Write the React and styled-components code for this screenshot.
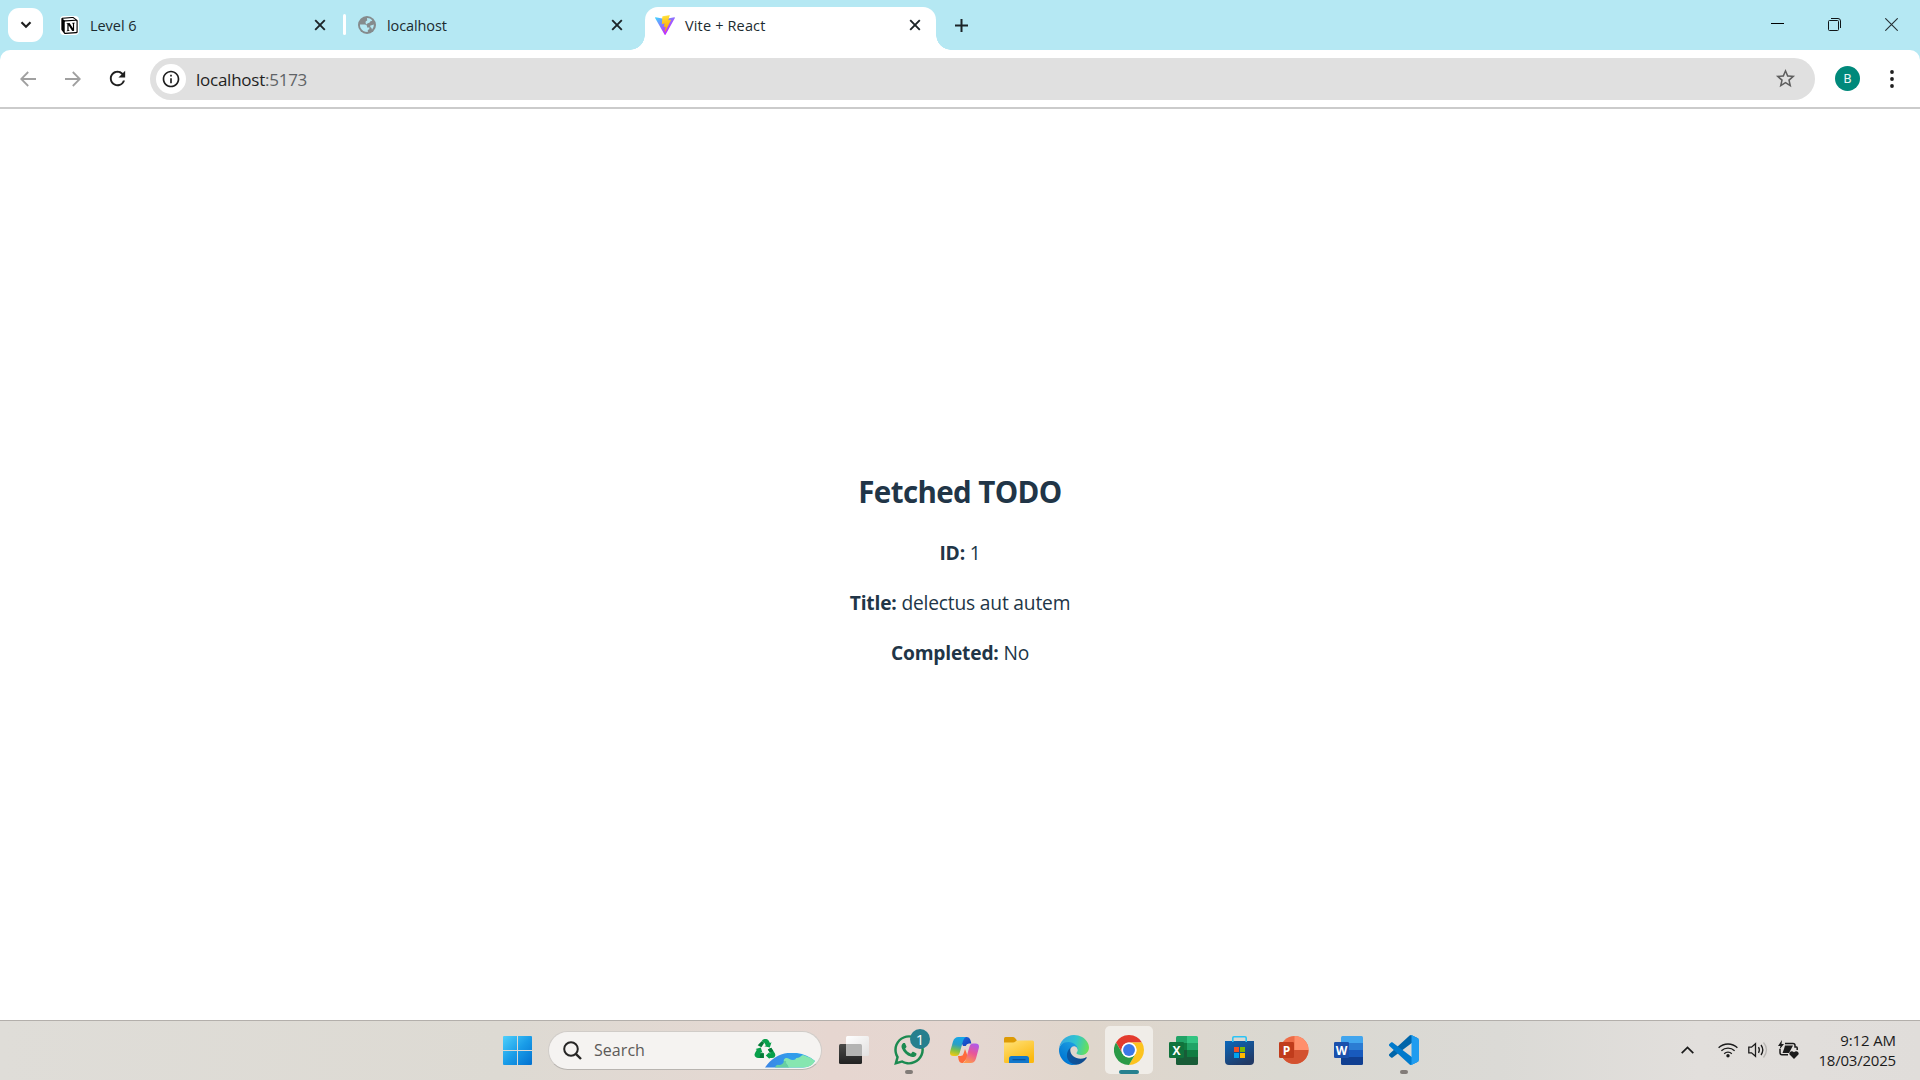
import React from "react";
import styled, { createGlobalStyle } from "styled-components";
import { FaWhatsapp } from "react-icons/fa";
import { SiNotion } from "react-icons/si";
import { MdInfoOutline, MdStarBorder, MdRefresh } from "react-icons/md";

const GlobalStyle = createGlobalStyle`
  * { box-sizing: border-box; }
  body {
    margin: 0;
    background: #fff;
    font-family: "Open Sans", "Noto Sans", sans-serif;
    overflow: hidden;
  }
  svg { display: block; flex: none; }
`;

const Desktop = styled.div`
  width: 1920px;
  height: 1080px;
  display: flex;
  flex-direction: column;
`;

/* ---------- tab strip ---------- */

const TabStrip = styled.div`
  height: 50px;
  flex: none;
  display: flex;
  background: #b5e8f3;
`;

const TabSearch = styled.div`
  width: 35px;
  height: 34px;
  margin: 8px 9px 0 8px;
  border-radius: 11px;
  background: #fff;
  display: flex;
  align-items: center;
  justify-content: center;
`;

const Tab = styled.div`
  position: relative;
  width: ${(p) => p.$width}px;
  height: ${(p) => (p.$active ? 43 : 36)}px;
  margin-top: 7px;
  padding: 0 ${(p) => p.$end}px ${(p) => (p.$active ? 7 : 0)}px ${(p) => p.$start}px;
  display: flex;
  align-items: center;
  background: ${(p) => (p.$active ? "#fff" : "transparent")};
  border-radius: 13px 13px 0 0;

  &::before,
  &::after {
    content: "";
    display: ${(p) => (p.$active ? "block" : "none")};
    position: absolute;
    bottom: 0;
    width: 15px;
    height: 15px;
  }
  &::before {
    left: -15px;
    background: radial-gradient(circle at 0 0, transparent 14.5px, #fff 15px);
  }
  &::after {
    right: -15px;
    background: radial-gradient(circle at 100% 0, transparent 14.5px, #fff 15px);
  }
`;

const Favicon = styled.span`
  width: 20px;
  height: 20px;
  display: flex;
  align-items: center;
  justify-content: center;
`;

const NotionBadge = styled.span`
  padding: 1px;
  margin-left: -1px;
  border-radius: 4px;
  background: #fff;
  color: #000;
`;

const TabTitle = styled.span`
  flex: 1;
  margin-left: 10px;
  padding-top: 1px;
  font-size: 14.5px;
  letter-spacing: ${(p) => p.$spacing}px;
  line-height: 20px;
  color: #1c2b30;
  white-space: nowrap;
`;

const Separator = styled.div`
  width: 3px;
  height: 21px;
  margin-top: 14px;
  border-radius: 2px;
  background: #fff;
`;

const NewTab = styled.div`
  width: 50px;
  height: 50px;
  display: flex;
  align-items: center;
  justify-content: center;
`;

const WindowButtons = styled.div`
  margin-left: auto;
  display: flex;
  height: 49px;
  align-items: center;
  gap: 43px;
  padding-right: 22px;
`;

/* ---------- toolbar ---------- */

const ToolbarBack = styled.div`
  height: 57px;
  flex: none;
  background: #b5e8f3;
`;

const Toolbar = styled.div`
  height: 57px;
  display: flex;
  align-items: center;
  padding: 0 20px;
  background: #fff;
  border-radius: 10px 10px 0 0;
`;

const NavButtons = styled.div`
  width: 130px;
  display: flex;
  align-items: center;
`;

const NavButton = styled.span`
  margin-right: ${(p) => p.$gap}px;
`;

const AddressBar = styled.div`
  width: 1665px;
  height: 42px;
  padding: 0 18px 0 6px;
  display: flex;
  align-items: center;
  border-radius: 21px;
  background: #e0e0e0;
`;

const SiteInfo = styled.div`
  width: 30px;
  height: 30px;
  border-radius: 50%;
  background: #fff;
  color: #1f1f1f;
  display: flex;
  align-items: center;
  justify-content: center;
`;

const Url = styled.span`
  flex: 1;
  margin-left: 10px;
  padding-top: 1px;
  font-size: 17px;
  letter-spacing: -0.25px;
  color: #1f1f1f;
`;

const Port = styled.span`
  color: #5f6366;
`;

const Avatar = styled.div`
  width: 25px;
  height: 25px;
  margin: 0 30px 0 20px;
  border-radius: 50%;
  background: #00897b;
  color: #e8f5f3;
  font: 13px/25px Roboto, sans-serif;
  text-align: center;
`;

/* ---------- page ---------- */

const Page = styled.main`
  height: 913px;
  flex: none;
  border-top: 2px solid #cbcbcb;
  background: #fff;
  display: flex;
  flex-direction: column;
  align-items: center;
  padding-top: 360px;
  color: #213547;
`;

const Heading = styled.h2`
  margin: 0 0 24px;
  font-size: 29.5px;
  line-height: 45px;
  font-weight: 700;
  letter-spacing: -0.6px;
`;

const Line = styled.p`
  margin: 0 0 20px;
  font-size: 19.2px;
  line-height: 30px;
  letter-spacing: -0.18px;
  white-space: nowrap;
`;

/* ---------- taskbar ---------- */

const Taskbar = styled.div`
  height: 60px;
  flex: none;
  display: flex;
  align-items: center;
  padding: 0 0 1px 503px;
  border-top: 1px solid #b3afab;
  background: linear-gradient(
    90deg,
    #dfddd8 0,
    #dddad3 500px,
    #e4d8d2 740px,
    #e6d6d0 830px,
    #e5d7d1 960px,
    #dfd6cc 1090px,
    #dad8d1 1280px,
    #dbdad6 1500px,
    #e2dfdc 1700px,
    #e0ddda 1920px
  );
`;

const SearchBox = styled.div`
  width: 274px;
  height: 39px;
  margin: 0 4px 0 16px;
  padding: 0 6px 0 14px;
  display: flex;
  align-items: center;
  border: 1px solid #d0ccc8;
  border-bottom-color: #b8b4b0;
  border-radius: 20px;
  background: #f5f3f1;
  overflow: hidden;
`;

const SearchText = styled.span`
  flex: 1;
  margin-left: 12px;
  font-size: 16px;
  letter-spacing: 0.05px;
  color: #5c5a58;
`;

const Doodle = styled.div`
  align-self: stretch;
  display: flex;
  align-items: flex-end;
`;

const RecycleMark = styled.span`
  margin: 0 -11px 10px 0;
`;

const EarthMark = styled.span`
  margin-bottom: 1px;
`;

const AppCell = styled.div`
  position: relative;
  width: 48px;
  height: 48px;
  margin: 0 3px 0 4px;
  flex: none;
  display: flex;
  align-items: center;
  justify-content: center;
  border-radius: 5px;
  background: ${(p) => (p.$active ? "#f0ede8" : "transparent")};

  &::after {
    content: "";
    display: ${(p) => (p.$mark ? "block" : "none")};
    position: absolute;
    left: 50%;
    bottom: 0;
    width: ${(p) => (p.$active ? 20 : 8)}px;
    height: 4px;
    transform: translateX(-50%);
    border-radius: 2px;
    background: ${(p) => (p.$active ? "#26808f" : "#827c78")};
  }
`;

const CountBadge = styled.span`
  position: absolute;
  top: 3px;
  right: 3px;
  width: 20px;
  height: 20px;
  border-radius: 50%;
  background: #267f8e;
  color: #fff;
  font-size: 15px;
  line-height: 20px;
  text-align: center;
`;

const Tray = styled.div`
  margin-left: auto;
  display: flex;
  align-items: center;
  padding-right: 24px;
`;

const TrayItem = styled.div`
  margin-right: ${(p) => p.$gap}px;
`;

const Clock = styled.div`
  width: 97px;
  padding-bottom: 1px;
  display: flex;
  flex-direction: column;
  align-items: flex-end;
  font-size: 15px;
  line-height: 20px;
  color: #1b1b1b;
  white-space: nowrap;
`;

const ClockLine = styled.span`
  letter-spacing: ${(p) => p.$spacing}px;
`;

/* ---------- drawings ---------- */

const CloseX = () => (
  <svg width="12" height="12" viewBox="0 0 12 12" stroke="#1c2428" strokeWidth="1.9">
    <path d="M1.2 1.2 10.8 10.8M10.8 1.2 1.2 10.8" />
  </svg>
);

const Globe = () => (
  <svg width="18" height="18" viewBox="0 0 18 18">
    <circle cx="9" cy="9" r="9" fill="#858b8d" />
    <g fill="#b5e8f3">
      <path d="M2 8.600H6.800Q9 8.700 9.100 10.600V11.500H11.500Q11.800 13.700 9.800 14V16Q4.500 16 2.500 11.800 1.900 10.300 2 8.600Z" />
      <path d="M9 2Q12.200 1.900 14.300 4.300 13.800 5.400 12.400 5.300 12 6.800 10.500 7 8.900 7.200 8.800 8.400 7.600 8.300 7.500 6.600 7.300 4.900 9.200 4.600Z" />
      <path d="M12.300 9.400Q14.200 9.500 15.900 8.600 16 11.500 14 13.800 13.900 11.400 12.300 11Z" />
    </g>
  </svg>
);

const Recycle = () => (
  <svg width="22" height="20" viewBox="0 0 22 20">
    <g fill="#08a04b">
      <path d="M7.600 2.200Q8.800 0 10.500 0H12.300Q13.800 0 14.600 1.500L16 4 17.500 3.200 15.800 8.600 10.300 7.300 11.900 6.400 10.300 3.700Z" />
      <path d="M17.200 8.800 21 14.600Q22 16.500 20.500 18.200 19.700 19 18 19H15.500V20L11.800 16.500 15.500 13V14.300H16.700L13.800 10.600Z" />
      <path d="M9.800 19H4Q2 19 .9 17.200 0 15.600 1 13.900L2.800 10.800 1.500 10 6.800 8.600 8.500 14 7 13.200 6.500 14.300H9.800Z" />
    </g>
    <g fill="#067a38">
      <path d="M7.600 2.200 10.300 3.700 7.400 8.300 3.700 6.200Z" />
      <path d="M17.200 8.800 19.300 12 15.800 13.500 13.800 10.600Z" />
      <path d="M6.500 14.300H9.800V19H5.500Z" />
    </g>
  </svg>
);

const ViteLogo = () => (
  <svg width="20" height="20" viewBox="0 0 256 257">
    <defs>
      <linearGradient id="viteA" x1="-.83%" x2="57.64%" y1="7.65%" y2="78.4%">
        <stop offset="0%" stopColor="#41D1FF" />
        <stop offset="100%" stopColor="#BD34FE" />
      </linearGradient>
      <linearGradient id="viteB" x1="43.4%" x2="50.3%" y1="2.2%" y2="89%">
        <stop offset="0%" stopColor="#FFEA83" />
        <stop offset="8.3%" stopColor="#FFDD35" />
        <stop offset="100%" stopColor="#FFA800" />
      </linearGradient>
    </defs>
    <path fill="url(#viteA)" d="M255.153 37.938L134.897 252.976c-2.483 4.44-8.862 4.466-11.382.048L.875 37.958c-2.746-4.814 1.371-10.646 6.827-9.67l120.385 21.517a6.537 6.537 0 0 0 2.322-.004l117.867-21.483c5.438-.991 9.574 4.796 6.877 9.62Z" />
    <path fill="url(#viteB)" d="M185.432.063L96.44 17.501a3.268 3.268 0 0 0-2.634 3.014l-5.474 92.456a3.268 3.268 0 0 0 3.997 3.378l24.777-5.718c2.318-.535 4.413 1.507 3.936 3.838l-7.361 36.047c-.495 2.426 1.782 4.5 4.151 3.78l15.304-4.649c2.372-.72 4.652 1.36 4.15 3.788l-11.698 56.621c-.732 3.542 3.979 5.473 5.943 2.437l1.313-2.028l72.516-144.72c1.215-2.423-.88-5.186-3.54-4.672l-25.505 4.922c-2.396.462-4.435-1.77-3.759-4.114l16.646-57.705c.677-2.35-1.37-4.583-3.769-4.113Z" />
  </svg>
);

const Arrow = ({ forward }) => (
  <svg width="16" height="16" viewBox="0 0 16 16" fill="none" stroke="#a0a0a0" strokeWidth="1.8">
    <path d={forward ? "M0 8H14.500M7.800 1 14.800 8 7.800 15" : "M16 8H1.500M8.200 1 1.200 8 8.200 15"} />
  </svg>
);

const WindowsLogo = () => (
  <svg width="29" height="29" viewBox="0 0 29 29">
    <defs>
      <linearGradient id="win" gradientUnits="userSpaceOnUse" x1="0" y1="0" x2="29" y2="29">
        <stop offset="0" stopColor="#4fd0fb" />
        <stop offset="0.5" stopColor="#1a9de8" />
        <stop offset="1" stopColor="#0270cf" />
      </linearGradient>
    </defs>
    <path fill="url(#win)" d="M1 0H14V14H0V1Q0 0 1 0ZM15 0H28Q29 0 29 1V14H15ZM0 15H14V29H1Q0 29 0 28ZM15 15H29V28Q29 29 28 29H15Z" />
  </svg>
);

const Earth = () => (
  <svg width="50" height="15" viewBox="0 0 50 15">
    <defs>
      <linearGradient id="sea" x1="0" x2="1">
        <stop offset="0" stopColor="#3c86e4" />
        <stop offset="1" stopColor="#28b0f4" />
      </linearGradient>
    </defs>
    <path fill="url(#sea)" d="M0 14.500C12-4 36-4 50 8Q46 14 38 14.500Z" />
    <path fill="#86e6b0" d="M22 14.500C25 11 17 10 19 6.500 22 3 24 7 28 7 32 7 30 4 34 3.500L38 2Q45 4 50 8 47 14 38 14.500Z" />
    <path fill="#68cfa0" d="M10 14.500Q11 11 14 12 18 12 19 8 22 7 21 10L24 14.500Z" />
    <path fill="#329be8" d="M25 1H37Q36 5 31 5 28 4 25 1Z" />
  </svg>
);

const TaskView = () => (
  <svg width="30" height="28" viewBox="0 0 30 28">
    <defs>
      <linearGradient id="tvDark" x1="0" y1="0" x2="0" y2="1">
        <stop offset="0" stopColor="#4a4a48" />
        <stop offset="1" stopColor="#222" />
      </linearGradient>
      <linearGradient id="tvLight" x1="0" y1="0" x2="1" y2="1">
        <stop offset="0" stopColor="#fff" />
        <stop offset="1" stopColor="#e2e0df" />
      </linearGradient>
    </defs>
    <rect x="0" y="8" width="23" height="20" rx="1.500" fill="url(#tvDark)" />
    <rect x="7" y="0" width="23" height="20" rx="1.500" fill="url(#tvLight)" />
    <path d="M7 8H21.500Q23 8 23 9.500V20H8.500Q7 20 7 18.500Z" fill="#b4b4b3" />
  </svg>
);

const Copilot = () => (
  <svg width="29" height="26" viewBox="0 0 29 26">
    <defs>
      <linearGradient id="cpA" x1="0.500" y1="0" x2="0.300" y2="1">
        <stop offset="0" stopColor="#16a6e8" />
        <stop offset="0.400" stopColor="#2a9fc4" />
        <stop offset="0.700" stopColor="#7cc04a" />
        <stop offset="1" stopColor="#f0c914" />
      </linearGradient>
      <linearGradient id="cpB" x1="0.700" y1="0" x2="0.300" y2="1">
        <stop offset="0" stopColor="#b05ae8" />
        <stop offset="0.450" stopColor="#e8559a" />
        <stop offset="1" stopColor="#ff9a4a" />
      </linearGradient>
      <linearGradient id="cpC" x1="0" y1="0" x2="1" y2="1">
        <stop offset="0" stopColor="#1d6fe0" />
        <stop offset="1" stopColor="#1438b8" />
      </linearGradient>
    </defs>
    <path fill="url(#cpC)" d="M9 0H17Q19.500 0 20.300 2.700L21.400 6.500H19Q16.500 6.500 15.700 9L13 9Z" />
    <path fill="url(#cpA)" d="M8.500 0H16Q13.800 1 13 4L9.800 15.500Q8.800 19 6 19H3.500Q-1 19 .3 14L3 4.500Q4.300 0 8.500 0Z" />
    <path fill="#ff6a3c" d="M8 19H10.500Q13 19 13.600 16.500L15 12 18 20 13 26H12Q9.500 26 8.700 23Z" />
    <path fill="url(#cpB)" d="M20.500 26H12.500Q15 25.500 16 22L19.200 10.500Q20.200 6.500 23 6.500H25.500Q30 6.500 28.700 11.500L26 21.500Q24.700 26 20.500 26Z" />
  </svg>
);

const Explorer = () => (
  <svg width="30" height="26" viewBox="0 0 30 26">
    <defs>
      <linearGradient id="fold" x1="0" y1="0" x2="0.600" y2="1">
        <stop offset="0" stopColor="#ffe27a" />
        <stop offset="1" stopColor="#fcb90f" />
      </linearGradient>
    </defs>
    <path fill="#dd9a05" d="M1.500 0H9Q10 0 11 1L13 3.500V9H0V1.500Q0 0 1.500 0Z" />
    <path fill="url(#fold)" d="M0 5.500H9Q10.500 5.500 11.500 4.500L12.500 3.500H28.500Q30 3.500 30 5V24.500Q30 26 28.500 26H1.500Q0 26 0 24.500Z" />
    <path fill="#1278cc" d="M7.500 19H22.500Q25 19 25 21.500V26H5V21.500Q5 19 7.500 19Z" />
    <path fill="#0c549c" d="M8.500 22H21.500V23.300H8.500Z" />
  </svg>
);

const Edge = () => (
  <svg width="30" height="30" viewBox="0 0 256 256">
    <defs>
      <linearGradient id="edA" gradientUnits="userSpaceOnUse" x1="58" y1="177" x2="236" y2="177">
        <stop offset="0" stopColor="#0c59a4" />
        <stop offset="1" stopColor="#114a8b" />
      </linearGradient>
      <linearGradient id="edB" gradientUnits="userSpaceOnUse" x1="152" y1="85" x2="45" y2="222">
        <stop offset="0" stopColor="#1b9de2" />
        <stop offset="0.600" stopColor="#0c86d8" />
        <stop offset="1" stopColor="#0078d4" />
      </linearGradient>
      <linearGradient id="edC" gradientUnits="userSpaceOnUse" x1="20" y1="60" x2="245" y2="120">
        <stop offset="0" stopColor="#35a8e0" />
        <stop offset="0.500" stopColor="#2fc4d0" />
        <stop offset="1" stopColor="#66e05a" />
      </linearGradient>
    </defs>
    <path fill="url(#edA)" d="M231 190.5c-3.4 1.8-6.900 3.400-10.500 4.700-11.500 4.300-23.600 6.500-35.900 6.500-47.300 0-88.500-32.500-88.500-74.300.1-11.400 6.400-21.900 16.400-27.300-42.800 1.800-53.800 46.400-53.800 72.500 0 73.900 68.100 81.400 82.800 81.400 7.900 0 19.800-2.300 27-4.600l1.300-.4c27.600-9.500 51-28.100 66.600-52.800 1.200-1.900.6-4.300-1.200-5.500-1.300-.8-2.900-.9-4.200-.2z" />
    <path fill="url(#edB)" d="M105.700 241.400c-8.900-5.500-16.600-12.800-22.700-21.300-26.300-36-18.400-86.500 17.600-112.800 3.800-2.700 7.700-5.200 11.900-7.200 3.100-1.500 8.400-4.100 15.500-4 10.100.1 19.600 4.900 25.700 13 4 5.400 6.300 11.900 6.400 18.700 0-.2 24.500-79.600-80-79.600-43.900 0-80 41.700-80 78.200-.2 19.300 4 38.500 12.100 56 27.600 58.800 94.800 87.600 156.400 67.100-21.100 6.600-44.100 3.700-62.900-8.100z" />
    <path fill="url(#edC)" d="M152.300 148.900c-.9 1-3.400 2.500-3.400 5.600 0 2.600 1.700 5.200 4.800 7.300 14.300 10 41.400 8.600 41.500 8.600 10.700 0 21.100-2.900 30.300-8.300 18.800-11 30.400-31.100 30.400-52.900.3-22.400-8-37.300-11.300-43.900C223.500 23.900 177.700 0 128 0 58 0 1 56.200 0 126.200c.5-36.500 36.800-66 80-66 3.500 0 23.500.3 42 10.100 16.300 8.600 24.900 18.900 30.800 29.200 6.200 10.700 7.300 24.100 7.300 29.500s-2.700 13.300-7.800 19.900z" />
  </svg>
);

const Chrome = () => (
  <svg width="30" height="30" viewBox="0 0 48 48">
    <path fill="#e33b2e" d="M24 12H44.780A24 24 0 0 0 3.210 12L13.600 30A12 12 0 0 1 24 12Z" />
    <path fill="#fcc31e" d="M44.780 12H24A12 12 0 0 1 34.400 30L24 48A24 24 0 0 0 44.780 12Z" />
    <path fill="#2a9a47" d="M3.210 12 13.600 30A12 12 0 0 0 34.400 30L24 48A24 24 0 0 1 3.210 12Z" />
    <circle cx="24" cy="24" r="12" fill="#fff" />
    <circle cx="24" cy="24" r="9.500" fill="#3b78e7" />
  </svg>
);

const Letter = styled.text`
  font: 700 12px "Open Sans", sans-serif;
  fill: #fff;
  text-anchor: middle;
`;

const Excel = () => (
  <svg width="30" height="29" viewBox="0 0 30 29">
    <path fill="#21a366" d="M8.500 0H19V7H7V1.500Q7 0 8.500 0Z" />
    <path fill="#33c481" d="M18 0H27.500Q29 0 29 1.500V7H18Z" />
    <path fill="#107c41" d="M7 7H18V14H7Z" />
    <path fill="#21a366" d="M18 7H29V14H18Z" />
    <path fill="#185c37" d="M7 14H29V27.500Q29 29 27.500 29H8.500Q7 29 7 27.500Z" />
    <path fill="#107c41" d="M18 14H29V21H18Z" />
    <rect x="0" y="6" width="15" height="16" rx="1.300" fill="#10733d" />
    <Letter x="7.500" y="18.500">X</Letter>
  </svg>
);

const Store = () => (
  <svg width="29" height="29" viewBox="0 0 29 29">
    <defs>
      <linearGradient id="bag" x1="0" y1="0" x2="0.600" y2="1">
        <stop offset="0" stopColor="#0b68bb" />
        <stop offset="1" stopColor="#213a66" />
      </linearGradient>
    </defs>
    <path fill="url(#bag)" d="M0 5H29V25Q29 29 25 29H4Q0 29 0 25Z" />
    <path fill="none" stroke="#2cc3f5" strokeWidth="1.600" d="M7.800 6V2Q7.800 .8 9 .8H20Q21.200 .8 21.200 2V6" />
    <path fill="#f25022" d="M9 11H14V16H9Z" />
    <path fill="#7fba00" d="M15 11H20V16H15Z" />
    <path fill="#00a4ef" d="M9 17H14V22H9Z" />
    <path fill="#ffb900" d="M15 17H20V22H15Z" />
  </svg>
);

const PowerPoint = () => (
  <svg width="30" height="29" viewBox="0 0 30 29">
    <circle cx="15.500" cy="14" r="14" fill="#ed6c47" />
    <path fill="#ff8f6b" d="M15.500 0A14 14 0 0 1 29.500 14H15.500Z" />
    <path fill="#d35230" d="M1.500 14A14 14 0 0 0 29.500 14Z" />
    <rect x="0" y="6" width="15" height="16" rx="1.300" fill="#c03c1c" />
    <Letter x="7.500" y="18.500">P</Letter>
  </svg>
);

const Word = () => (
  <svg width="30" height="29" viewBox="0 0 30 29">
    <path fill="#41a5ee" d="M8.500 0H27.500Q29 0 29 1.500V7H7V1.500Q7 0 8.500 0Z" />
    <path fill="#2b7cd3" d="M7 7H29V14H7Z" />
    <path fill="#185abd" d="M7 14H29V21H7Z" />
    <path fill="#103f91" d="M7 21H29V27.500Q29 29 27.500 29H8.500Q7 29 7 27.500Z" />
    <rect x="0" y="6" width="15" height="16" rx="1.300" fill="#1a50ac" />
    <Letter x="7.500" y="18.500">W</Letter>
  </svg>
);

const VsCode = () => (
  <svg width="30" height="30" viewBox="0 0 100 100">
    <path fill="#0065a9" d="M96.461 10.796L75.857.876C73.472-.273 70.622.212 68.750 2.083L1.299 63.583C-.516 65.237-.514 68.094 1.303 69.745L6.813 74.754C8.298 76.104 10.535 76.204 12.134 74.990L93.361 13.370C96.086 11.303 100 13.246 100 16.667V16.428C100 14.027 98.625 11.838 96.461 10.796Z" />
    <path fill="#007acc" d="M96.461 89.204L75.857 99.125C73.472 100.273 70.622 99.788 68.750 97.917L1.299 36.417C-.516 34.763-.514 31.906 1.303 30.255L6.813 25.246C8.298 23.896 10.535 23.796 12.134 25.010L93.361 86.630C96.086 88.697 100 86.754 100 83.333V83.573C100 85.974 98.625 88.162 96.461 89.204Z" />
    <path fill="#1f9cf0" d="M75.858 99.126C73.472 100.274 70.622 99.789 68.750 97.917C71.056 100.223 75 98.590 75 95.328V4.672C75 1.410 71.056-.223 68.750 2.083C70.622.211 73.472-.274 75.858.874L96.459 10.781C98.623 11.822 100 14.011 100 16.413V83.587C100 85.989 98.623 88.179 96.459 89.220L75.858 99.126Z" />
  </svg>
);

const Wifi = () => (
  <svg width="20" height="16" viewBox="0 0 20 16" fill="none" stroke="#1b1b1b" strokeWidth="1.300">
    <path d="M.6 5.800A13.500 13.500 0 0 1 19.400 5.800M3.400 8.800A9.500 9.500 0 0 1 16.600 8.800M6.200 11.700A5.500 5.500 0 0 1 13.800 11.700" />
    <circle cx="10" cy="13.800" r="1.700" fill="#1b1b1b" stroke="none" />
  </svg>
);

const Volume = () => (
  <svg width="21" height="18" viewBox="0 0 21 18" fill="none" stroke="#1b1b1b" strokeWidth="1.300">
    <path d="M.8 6.200H3.500L7.500 2.700V15.300L3.500 11.800H.8Z" />
    <path d="M10.500 6.200Q12.200 9 10.500 11.800M13 4Q16.600 9 13 14" />
    <path d="M15.500 1.500Q21.500 8.500 15.500 16.500" stroke="#b9b6b3" />
  </svg>
);

const Battery = () => (
  <svg width="21" height="20" viewBox="0 0 21 20">
    <path d="M7 3.500H15Q17 3.500 17 5.500V7H18.500Q19.200 7 19.200 8V10M2 9V12.500Q2 14.800 4 14.800H10" fill="none" stroke="#1b1b1b" strokeWidth="1.500" />
    <path d="M7 5.500H15L11 13H4.500L6 9Z" fill="#1b1b1b" />
    <path d="M4 0 0 6H2.500L1.500 9.500 6 4H3.500Z" fill="#1b1b1b" />
    <path d="M16 19 11.800 14.800C10 12.500 13.500 9.500 16 12.200 18.500 9.500 22 12.500 20.200 14.800Z" fill="#1b1b1b" />
  </svg>
);

/* ---------- app ---------- */

const apps = [
  { name: "taskview", icon: <TaskView /> },
  { name: "whatsapp", icon: <FaWhatsapp size={34} color="#1b8a50" />, mark: true, count: 1 },
  { name: "copilot", icon: <Copilot /> },
  { name: "explorer", icon: <Explorer /> },
  { name: "edge", icon: <Edge /> },
  { name: "chrome", icon: <Chrome />, mark: true, active: true },
  { name: "excel", icon: <Excel /> },
  { name: "store", icon: <Store /> },
  { name: "powerpoint", icon: <PowerPoint /> },
  { name: "word", icon: <Word /> },
  { name: "vscode", icon: <VsCode />, mark: true },
];

export default function App() {
  return (
    <Desktop>
      <GlobalStyle />
      <TabStrip>
        <TabSearch>
          <svg width="12" height="8" viewBox="0 0 12 8" fill="none" stroke="#1f1f1f" strokeWidth="2.200">
            <path d="M1.500 1.300 6 5.800 10.500 1.300" />
          </svg>
        </TabSearch>
        <Tab $width={291} $start={8} $end={17}>
          <Favicon>
            <NotionBadge><SiNotion size={17} /></NotionBadge>
          </Favicon>
          <TabTitle $spacing={-0.05}>Level 6</TabTitle>
          <CloseX />
        </Tab>
        <Separator />
        <Tab $width={299} $start={11} $end={22}>
          <Favicon><Globe /></Favicon>
          <TabTitle $spacing={-0.1}>localhost</TabTitle>
          <CloseX />
        </Tab>
        <Tab $width={291} $start={10} $end={15} $active>
          <Favicon><ViteLogo /></Favicon>
          <TabTitle $spacing={0.15}>Vite + React</TabTitle>
          <CloseX />
        </Tab>
        <NewTab>
          <svg width="13" height="13" viewBox="0 0 13 13" stroke="#1c2428" strokeWidth="2">
            <path d="M6.500 0V13M0 6.500H13" />
          </svg>
        </NewTab>
        <WindowButtons>
          <svg width="14" height="13" viewBox="0 0 14 13"><path d="M0 5H13V6H0Z" fill="#000" /></svg>
          <svg width="14" height="14" viewBox="0 0 14 14" fill="none" stroke="#101517">
            <rect x=".5" y="2.500" width="10" height="10" rx="1" />
            <path d="M3 .5H10Q12.500.5 12.500 3V10" />
          </svg>
          <svg width="13" height="13" viewBox="0 0 13 13" stroke="#263034" strokeWidth="1.100"><path d="M.3.3 12.700 12.700M12.700.3.3 12.700" /></svg>
        </WindowButtons>
      </TabStrip>
      <ToolbarBack>
        <Toolbar>
          <NavButtons>
            <NavButton $gap={29}><Arrow /></NavButton>
            <NavButton $gap={25}><Arrow forward /></NavButton>
            <MdRefresh size={23} color="#1f1f1f" />
          </NavButtons>
          <AddressBar>
            <SiteInfo><MdInfoOutline size={20} /></SiteInfo>
            <Url>localhost<Port>:5173</Port></Url>
            <MdStarBorder size={23} color="#5f5f5f" />
          </AddressBar>
          <Avatar>B</Avatar>
          <svg width="4" height="18" viewBox="0 0 4 18" fill="#1f1f1f">
            <circle cx="2" cy="2" r="1.900" /><circle cx="2" cy="9" r="1.900" /><circle cx="2" cy="16" r="1.900" />
          </svg>
        </Toolbar>
      </ToolbarBack>
      <Page>
        <Heading>Fetched TODO</Heading>
        <Line><strong>ID:</strong> 1</Line>
        <Line><strong>Title:</strong> delectus aut autem</Line>
        <Line><strong>Completed:</strong> No</Line>
      </Page>
      <Taskbar>
        <WindowsLogo />
        <SearchBox>
          <svg width="19" height="19" viewBox="0 0 19 19" fill="none" stroke="#262524" strokeWidth="2">
            <circle cx="8" cy="8" r="6.800" />
            <path d="M12.800 12.800 18 18" strokeWidth="2.400" />
          </svg>
          <SearchText>Search</SearchText>
          <Doodle>
            <RecycleMark><Recycle /></RecycleMark>
            <EarthMark><Earth /></EarthMark>
          </Doodle>
        </SearchBox>
        {apps.map((app) => (
          <AppCell key={app.name} $active={app.active} $mark={app.mark}>
            {app.icon}
            {app.count && <CountBadge>{app.count}</CountBadge>}
          </AppCell>
        ))}
        <Tray>
          <TrayItem $gap={24}>
            <svg width="13" height="8" viewBox="0 0 13 8" fill="none" stroke="#1b1b1b" strokeWidth="1.700">
              <path d="M.7 7.200 6.500 1.400 12.300 7.200" />
            </svg>
          </TrayItem>
          <TrayItem $gap={10}><Wifi /></TrayItem>
          <TrayItem $gap={9}><Volume /></TrayItem>
          <TrayItem $gap={0}><Battery /></TrayItem>
          <Clock>
            <ClockLine $spacing={-0.1}>9:12 AM</ClockLine>
            <ClockLine $spacing={-0.2}>18/03/2025</ClockLine>
          </Clock>
        </Tray>
      </Taskbar>
    </Desktop>
  );
}
